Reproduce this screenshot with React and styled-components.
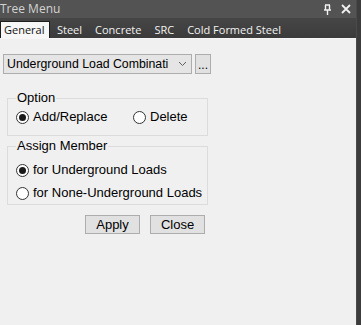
import React from "react";
import styled, { createGlobalStyle } from "styled-components";

const GlobalStyle = createGlobalStyle`
  html, body {
    margin: 0;
    padding: 0;
    background: #f0f0f0;
  }
  #root {
    width: 361px;
    height: 325px;
  }
`;

const Frame = styled.div`
  display: flex;
  width: 361px;
  height: 325px;
  overflow: hidden;
`;

const Panel = styled.div`
  flex: 1;
  display: flex;
  flex-direction: column;
  background: #f0f0f0;
`;

const RightEdge = styled.div`
  width: 4px;
  background: #3c3c3c;
  border-left: 1px solid #4a4a4a;
`;

const TitleBar = styled.div`
  height: 18px;
  display: flex;
  align-items: center;
  justify-content: space-between;
  padding: 0 5px 0 0;
  background: #535353;
  color: #d2d2d2;
  font: 12px "Open Sans", "DejaVu Sans", sans-serif;
`;

const TitleText = styled.span`
  line-height: 18px;
`;

const TitleIcons = styled.div`
  display: flex;
  align-items: center;
  gap: 9px;
`;

const TabStrip = styled.div`
  height: 20px;
  display: flex;
  align-items: flex-end;
  background: linear-gradient(#464646, #3b3b3b);
  font: 11px "Open Sans", "DejaVu Sans", sans-serif;
`;

const Tab = styled.div`
  height: ${(p) => (p.active ? "17px" : "16px")};
  line-height: 16px;
  padding: ${(p) => (p.active ? "0 5px 0 3px" : "0 6.5px")};
  color: ${(p) => (p.active ? "#111" : "#f2f2f2")};
  background: ${(p) => (p.active ? "#f7f7f7" : "transparent")};
  border: ${(p) => (p.active ? "1px solid #1e1e1e" : "none")};
  border-bottom: none;
  box-sizing: border-box;
  white-space: nowrap;
`;

const Body = styled.div`
  flex: 1;
  padding: 15px 0 0 3px;
  border-top: 1px solid #f6f6f6;
  font: 13px "Liberation Sans", Arial, sans-serif;
  color: #000;
`;

const ComboRow = styled.div`
  display: flex;
  align-items: center;
  gap: 3px;
`;

const Combo = styled.div`
  width: 189px;
  height: 20px;
  box-sizing: border-box;
  display: flex;
  align-items: center;
  justify-content: space-between;
  padding: 0 4px 0 3px;
  border: 1px solid #adadad;
  background: #e5e5e5;
  font-size: 12.3px;
  white-space: nowrap;
  overflow: hidden;
`;

const SmallButton = styled.div`
  width: 16px;
  height: 20px;
  box-sizing: border-box;
  border: 1px solid #adadad;
  background: #e1e1e1;
  text-align: center;
  line-height: 20px;
  font-size: 12px;
`;

const Group = styled.fieldset`
  width: 201px;
  box-sizing: border-box;
  margin: ${(p) => p.top}px 0 0 4px;
  padding: ${(p) => p.pad};
  border: 1px solid #dcdcdc;
  display: flex;
  flex-direction: ${(p) => (p.row ? "row" : "column")};
  gap: ${(p) => (p.row ? "0" : "7px")};
  min-width: 0;
`;

const Legend = styled.legend`
  padding: 0 1px;
  margin-left: 0;
  line-height: 14px;
`;

const RadioItem = styled.label`
  display: flex;
  align-items: center;
  gap: 4px;
  width: ${(p) => p.w || "auto"};
  line-height: 16px;
  white-space: nowrap;
`;

const RadioDot = styled.span`
  width: 11px;
  height: 11px;
  flex: none;
  border-radius: 50%;
  border: 1px solid #333;
  background: #fff;
  display: flex;
  align-items: center;
  justify-content: center;
  &::after {
    content: "";
    width: 7px;
    height: 7px;
    border-radius: 50%;
    background: ${(p) => (p.checked ? "#1a1a1a" : "transparent")};
  }
`;

const ButtonRow = styled.div`
  display: flex;
  gap: 10px;
  margin: 10px 0 0 82px;
`;

const PushButton = styled.div`
  width: 55px;
  height: 19px;
  box-sizing: border-box;
  border: 1px solid #adadad;
  background: #e1e1e1;
  text-align: center;
  line-height: 17px;
`;

const Chevron = () => (
  <svg width="9" height="6" viewBox="0 0 9 6">
    <path d="M1 1l3.5 3.5L8 1" fill="none" stroke="#606060" strokeWidth="1" />
  </svg>
);

const PinIcon = () => (
  <svg width="9" height="11" viewBox="0 0 9 11">
    <path d="M2 1h5M2.5 1v5M6.5 1v5M1 6h7M4.5 6v5" stroke="#f2f2f2" strokeWidth="1.4" fill="none" />
  </svg>
);

const CloseIcon = () => (
  <svg width="10" height="10" viewBox="0 0 10 10">
    <path d="M1 1l8 8M9 1l-8 8" stroke="#f2f2f2" strokeWidth="1.8" />
  </svg>
);

const Radio = ({ checked, children, w }) => (
  <RadioItem w={w}>
    <RadioDot checked={checked} />
    {children}
  </RadioItem>
);

export default function App() {
  const tabs = ["General", "Steel", "Concrete", "SRC", "Cold Formed Steel"];
  return (
    <>
      <GlobalStyle />
      <Frame>
        <Panel>
          <TitleBar>
            <TitleText>Tree Menu</TitleText>
            <TitleIcons>
              <PinIcon />
              <CloseIcon />
            </TitleIcons>
          </TitleBar>
          <TabStrip>
            {tabs.map((t, i) => (
              <Tab key={t} active={i === 0}>
                {t}
              </Tab>
            ))}
          </TabStrip>
          <Body>
            <ComboRow>
              <Combo>
                <span>Underground Load Combinati</span>
                <Chevron />
              </Combo>
              <SmallButton>...</SmallButton>
            </ComboRow>
            <Group top={17} pad="4px 0 10px 8px" row>
              <Legend>Option</Legend>
              <Radio checked w="117px">Add/Replace</Radio>
              <Radio>Delete</Radio>
            </Group>
            <Group top={3} pad="9px 0 3px 8px">
              <Legend>Assign Member</Legend>
              <Radio checked>for Underground Loads</Radio>
              <Radio>for None-Underground Loads</Radio>
            </Group>
            <ButtonRow>
              <PushButton>Apply</PushButton>
              <PushButton>Close</PushButton>
            </ButtonRow>
          </Body>
        </Panel>
        <RightEdge />
      </Frame>
    </>
  );
}
